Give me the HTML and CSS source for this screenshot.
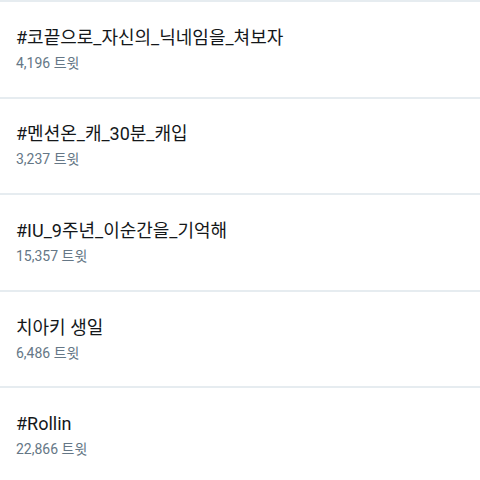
FILE: index.html
```html
<!DOCTYPE html>
<html lang="ko">
<head>
<meta charset="utf-8">
<link rel="stylesheet" href="styles.css">
</head>
<body>
<ul class="trends">
  <li class="trend"><span class="name">#코끝으로_자신의_닉네임을_쳐보자</span><span class="count">4,196 트윗</span></li>
  <li class="trend"><span class="name">#멘션온_캐_30분_캐입</span><span class="count">3,237 트윗</span></li>
  <li class="trend"><span class="name">#IU_9주년_이순간을_기억해</span><span class="count">15,357 트윗</span></li>
  <li class="trend"><span class="name">치아키 생일</span><span class="count">6,486 트윗</span></li>
  <li class="trend"><span class="name">#Rollin</span><span class="count">22,866 트윗</span></li>
</ul>
</body>
</html>
```

FILE: styles.css
```css
html, body {
  margin: 0;
  padding: 0;
  background: #ffffff;
}
body {
  font-family: Roboto, "Noto Sans CJK KR", sans-serif;
}
.trends {
  list-style: none;
  margin: 0;
  padding: 0;
}
.trend {
  box-sizing: border-box;
  height: 96.6px;
  border-top: 2px solid #e6ecf0;
  padding: 0 16px;
  display: flex;
  flex-direction: column;
  justify-content: center;
}
.name {
  font-size: 18px;
  line-height: 24px;
  color: #14171a;
}
.count {
  margin-top: 3px;
  font-size: 14px;
  line-height: 20px;
  color: #657786;
}
```
